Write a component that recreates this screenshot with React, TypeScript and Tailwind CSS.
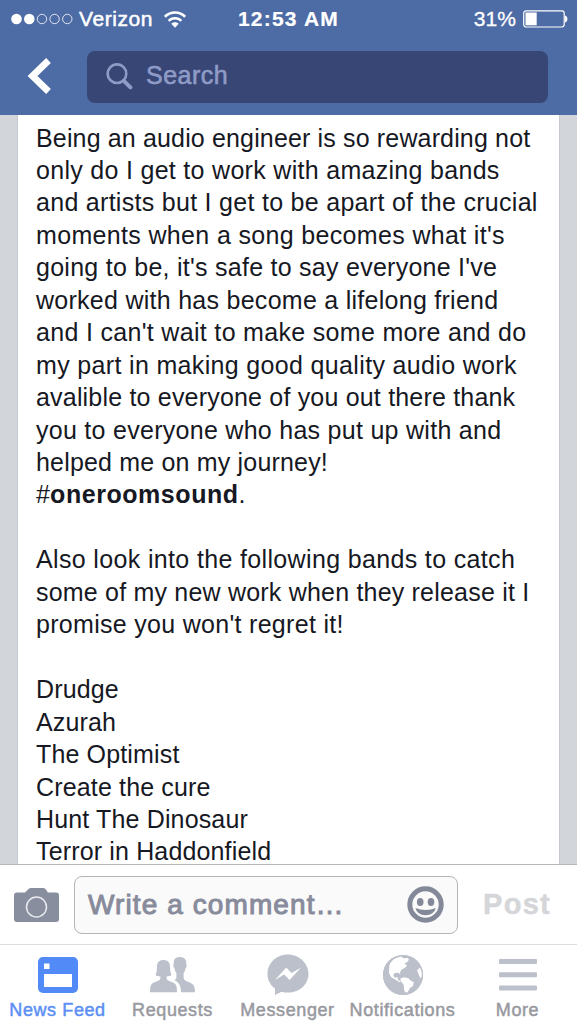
import React from 'react';

const introLines = [
  { text: 'Being an audio engineer is so rewarding not', tracking: 0.15 },
  { text: 'only do I get to work with amazing bands', tracking: 0.3 },
  { text: 'and artists but I get to be apart of the crucial', tracking: 0.29 },
  { text: "moments when a song becomes what it's", tracking: 0.34 },
  { text: "going to be, it's safe to say everyone I've", tracking: 0.26 },
  { text: 'worked with has become a lifelong friend', tracking: 0.27 },
  { text: "and I can't wait to make some more and do", tracking: 0.32 },
  { text: 'my part in making good quality audio work', tracking: 0.34 },
  { text: 'avalible to everyone of you out there thank', tracking: 0.19 },
  { text: 'you to everyone who has put up with and', tracking: 0.28 },
  { text: 'helped me on my journey!', tracking: 0.18 },
];

const moreLines = [
  { text: 'Also look into the following bands to catch', tracking: 0.35 },
  { text: 'some of my new work when they release it I', tracking: 0.2 },
  { text: "promise you won't regret it!", tracking: 0.3 },
];

const bands = [
  'Drudge',
  'Azurah',
  'The Optimist',
  'Create the cure',
  'Hunt The Dinosaur',
  'Terror in Haddonfield',
];

const StatusBar: React.FC = () => (
  <div className="grid h-[38px] shrink-0 grid-cols-[1fr_auto_1fr] items-center text-white">
    <div className="flex items-center pl-[11px]">
      <svg width="62" height="12" viewBox="0 0 62 12" fill="none" stroke="white">
        <circle cx="5.5" cy="6" r="5.3" fill="white" stroke="none" />
        <circle cx="18.3" cy="6" r="5.3" fill="white" stroke="none" />
        <circle cx="31" cy="6" r="4.7" strokeWidth="1" opacity="0.8" />
        <circle cx="43.6" cy="6" r="4.7" strokeWidth="1" opacity="0.8" />
        <circle cx="56.3" cy="6" r="4.7" strokeWidth="1" opacity="0.8" />
      </svg>
      <span className="ml-[6px] text-[21px] tracking-[0.55px] [-webkit-text-stroke:0.5px]">Verizon</span>
      <svg className="ml-[11px]" width="22" height="17" viewBox="0 0 22 17" fill="none" stroke="white" strokeWidth="2.6">
        <path d="M.9 5.8C6.3.1 15.7.1 21.1 5.8" />
        <path d="M4.7 9.8c3.3-3.5 9.3-3.5 12.6 0" />
        <path d="M11 16.7 7.3 12.8c2-2 5.4-2 7.4 0z" fill="white" stroke="none" />
      </svg>
    </div>
    <span className="text-[21px] font-bold tracking-[1.2px] [-webkit-text-stroke:0.2px]">12:53 AM</span>
    <div className="flex items-center justify-end pr-[9px]">
      <span className="text-[21px] tracking-[0.1px] [-webkit-text-stroke:0.3px]">31%</span>
      <svg className="ml-[7px]" width="45" height="18" viewBox="0 0 45 18">
        <rect x="0.7" y="0.8" width="40.5" height="16.2" rx="2.4" fill="none" stroke="white" strokeWidth="1.2" />
        <rect x="2.5" y="2.5" width="11.2" height="12.8" fill="white" />
        <path d="M42 5.5c3.2.6 3.2 6.3 0 6.9z" fill="white" />
      </svg>
    </div>
  </div>
);

const NavBar: React.FC = () => (
  <div className="flex flex-1 items-start pt-[13px] pr-[29px] pl-[27px]">
    <svg className="mt-[6px] shrink-0" width="25" height="38" viewBox="0 0 25 38">
      <path d="M21.500 3.500 5.500 19l16 15.500" fill="none" stroke="white" strokeWidth="6.800" />
    </svg>
    <div className="ml-[35px] flex h-[52px] flex-1 items-center rounded-[8px] bg-[#384675] pl-[19px] text-[#8f9bc7]">
      <svg className="-mt-[2px]" width="27" height="27" viewBox="0 0 27 27" fill="none" stroke="currentColor">
        <circle cx="11" cy="10.7" r="9.3" strokeWidth="2.6" />
        <path d="m17.8 17.8 6.600 6.600" strokeWidth="4" strokeLinecap="round" />
      </svg>
      <span className="-mt-[3px] ml-[13px] text-[25px] tracking-[0.5px] [-webkit-text-stroke:0.6px]">Search</span>
    </div>
  </div>
);

const Post: React.FC = () => (
  <div className="flex-1 overflow-hidden bg-[#d2d6db] px-[18px]">
    <div className="h-full bg-white pt-[6.5px] pl-[18px] text-[25px] leading-[32.45px] tracking-[0.15px] whitespace-nowrap text-[#161823] shadow-[0_0_0_1px_#c6c9d0]">
      {introLines.map(line => (
        <p key={line.text} style={{ letterSpacing: line.tracking }}>
          {line.text}
        </p>
      ))}
      <p>
        #<strong className="tracking-[0.55px]">oneroomsound</strong>.
      </p>
      <br />
      {moreLines.map(line => (
        <p key={line.text} style={{ letterSpacing: line.tracking }}>
          {line.text}
        </p>
      ))}
      <br />
      {bands.map(band => (
        <p key={band}>{band}</p>
      ))}
    </div>
  </div>
);

const CommentBar: React.FC = () => (
  <div className="flex h-[80px] shrink-0 items-center border-t border-[#b4b7bc] bg-white pl-[14px]">
    <svg className="shrink-0" width="45" height="34" viewBox="0 0 45 34">
      <path
        d="M3 4.5h8L14.8.8Q15.5 0 17 0h12q1.500 0 2.200.8L34 4.500h8q3 0 3 3V31q0 3-3 3H3q-3 0-3-3V7.500q0-3 3-3z"
        fill="#888e9e"
      />
      <circle cx="22.500" cy="19" r="10" fill="none" stroke="#e8eaee" strokeWidth="1.500" />
    </svg>
    <div className="ml-[15px] flex h-[58px] w-[384px] shrink-0 items-center justify-between rounded-[8px] border border-[#b3b5bb] bg-[#fafafa] pr-[13px] pl-[13px]">
      <span className="whitespace-nowrap text-[28px] tracking-[1.1px] text-[#888b9b] [-webkit-text-stroke:1px]">
        Write a comment…
      </span>
      <svg className="shrink-0" width="37" height="37" viewBox="0 0 37 37">
        <circle cx="18.500" cy="18.500" r="15.700" fill="none" stroke="#838998" strokeWidth="5" />
        <ellipse cx="13.200" cy="16" rx="3.300" ry="4.100" fill="#838998" />
        <ellipse cx="24" cy="16" rx="3.300" ry="4.100" fill="#838998" />
        <path d="M8.500 22c6 2.600 14.200 2.600 20.200 0-.8 4.200-4.800 7.200-10.100 7.200S9.300 26.200 8.500 22z" fill="#838998" />
      </svg>
    </div>
    <span className="ml-[25px] text-[29px] font-bold tracking-[1.3px] text-[#d5d6d9] [-webkit-text-stroke:0.5px]">
      Post
    </span>
  </div>
);

const NewsFeedIcon = () => (
  <svg width="40" height="36" viewBox="0 0 40 36">
    <rect width="40" height="36" rx="5" fill="#528bf8" />
    <rect x="6" y="6.500" width="5.500" height="5.500" fill="white" />
    <rect x="6" y="17" width="28" height="13" fill="white" />
  </svg>
);

const RequestsIcon = () => (
  <svg width="45" height="36" viewBox="0 0 45 36" fill="currentColor">
    <path d="M29.700 0c-4.500 0-6.400 2.800-5.900 7-.9.600-.3 4 .8 4.500.3 2 .9 3.500 1.800 4.600V21c-.4 1-1 1.800-2 2.300 4 1.500 6.600 5.200 6.600 12h14c0-5-.9-7.600-4.200-9.200-3.300-1.500-6.600-2.200-7.200-5v-5c.9-1.100 1.500-2.600 1.800-4.600 1.100-.5 1.700-3.900.8-4.500C36.700 2.800 34.600 0 29.700 0z" />
    <path d="M13.400 3C8.500 3 6.800 6.500 6.900 10.500c0 3.500-.5 5.500-1.400 7.500 1.300 1 3 1.400 4.900 1.400v2.200C9.700 24.400 5 24.600 2.300 26.500.5 27.800 0 30.500 0 35.300h27c0-4.800-.5-7.500-2.300-8.800-2.700-1.900-7.400-2.100-8.100-4.900v-2.200c1.900 0 3.600-.4 4.900-1.400-.9-2-1.400-4-1.400-7.500C20.200 6.500 18.400 3 13.400 3z" />
  </svg>
);

const MessengerIcon = () => (
  <svg width="42" height="42" viewBox="0 0 42 42">
    <path
      d="M21 .5C9.700.5.500 8.800.5 20c0 6.300 2.800 11 7.500 14.500V41l6.500-3.300c2 .6 4.200.9 6.500.9 11.300 0 20.500-8.200 20.500-18.600S32.300.5 21 .5z"
      fill="currentColor"
    />
    <path d="m8 26 11.200-12.500 5.300 5.400 9.300-5.200-11.300 12.200-5.300-5.500z" fill="white" />
  </svg>
);

const GlobeIcon = () => (
  <svg width="40" height="40" viewBox="0 0 40 40">
    <circle cx="20" cy="20" r="20" fill="currentColor" />
    <path
      d="M6.300 10.500C7.500 7 10 4.500 13 3l5.500-1.500 1.500 1.800 4.500-.3 1.500 1.700-1.800 2.300-2.700 1.500 2.500 2-2 2.200-3.500 2-1.500 2.500.3 2.300-1.800-1.700-4 .2-1.200 2.800 1.500 1.700 2.700-.2.500 2.200 2.200 2-.2 1-4-2.500-5-3-2-4z"
      fill="white"
    />
    <path d="m17.500 23.500 3.500-1.300 4.500 1 2 2.300 3.300 1.800-.8 3.700-3 2-2.300 4.200-2.500.3-1.300-3.500-.2-4.500-3.200-3.500z" fill="white" />
    <path d="m34 15.500 2.800-3 2 4.500v5l-1.800 1-1.200-3.500z" fill="white" />
    <circle cx="20" cy="20" r="19.500" fill="none" stroke="currentColor" />
  </svg>
);

const MoreIcon = () => (
  <svg width="38" height="32" viewBox="0 0 38 32" fill="currentColor">
    <rect width="38" height="5" rx="1" />
    <rect y="13.200" width="38" height="5" rx="1" />
    <rect y="26.500" width="38" height="5" rx="1" />
  </svg>
);

const tabs = [
  { label: 'News Feed', icon: NewsFeedIcon, active: true },
  { label: 'Requests', icon: RequestsIcon },
  { label: 'Messenger', icon: MessengerIcon },
  { label: 'Notifications', icon: GlobeIcon },
  { label: 'More', icon: MoreIcon },
];

const TabBar: React.FC = () => (
  <div className="grid h-[80px] shrink-0 grid-cols-5 border-t border-[#dcdde0] bg-white pr-[2px]">
    {tabs.map(({ label, icon: Icon, active }) => (
      <div key={label} className="flex flex-col items-center pt-[9px]">
        <div className="flex h-[42px] items-center text-[#bcc0ca]">
          <Icon />
        </div>
        <span
          className={`mt-[3px] text-[18px] leading-[22px] tracking-[0.6px] whitespace-nowrap [-webkit-text-stroke:0.5px] ${
            active ? 'text-[#5c8ff5]' : 'text-[#98999f]'
          }`}
        >
          {label}
        </span>
      </div>
    ))}
  </div>
);

const App: React.FC = () => {
  return (
    <div className="flex h-screen w-full flex-col overflow-hidden bg-white font-['Liberation_Sans',Arial,sans-serif]">
      <header className="flex h-[115px] shrink-0 flex-col bg-[#4d6ba5]">
        <StatusBar />
        <NavBar />
      </header>
      <Post />
      <CommentBar />
      <TabBar />
    </div>
  );
};

export default App;
